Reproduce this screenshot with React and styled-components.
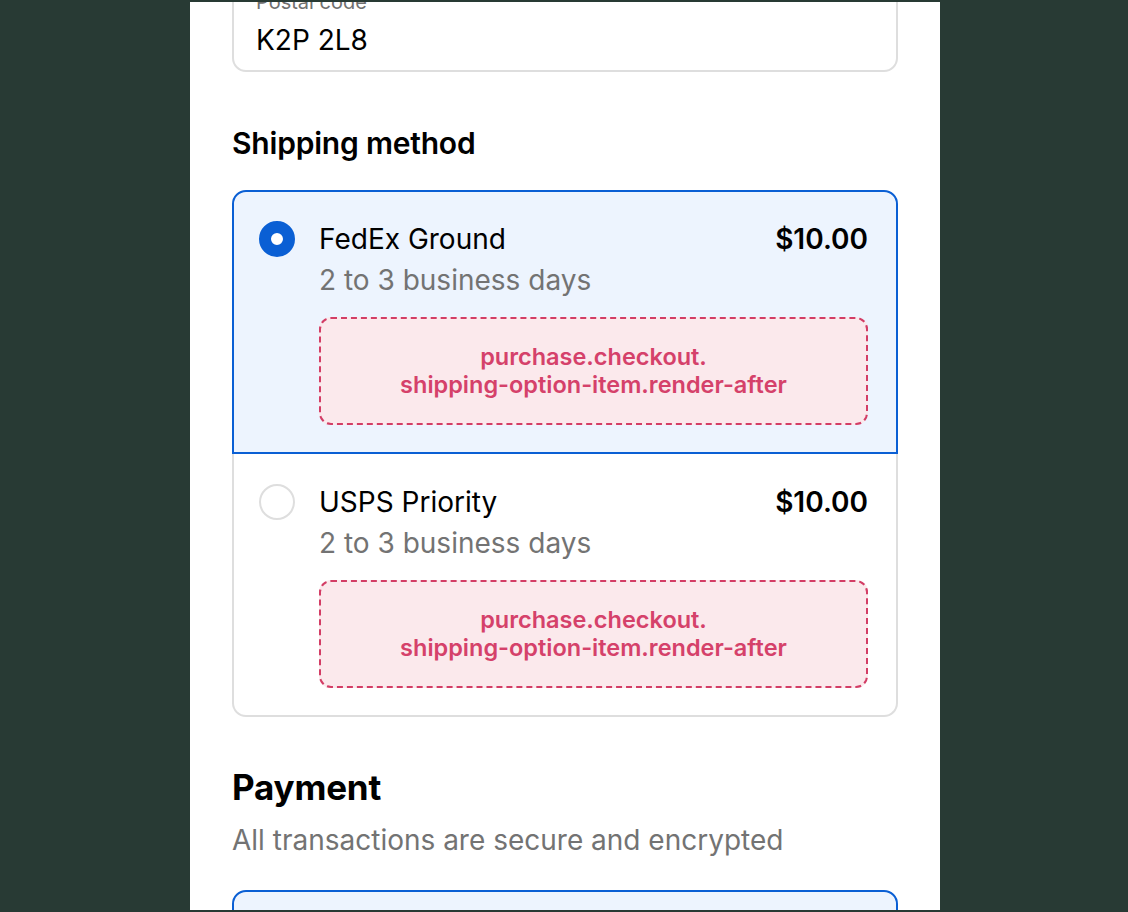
import React from "react";
import styled, { createGlobalStyle } from "styled-components";

const GlobalStyle = createGlobalStyle`
  html, body {
    margin: 0;
    padding: 0;
    background: #283a34;
    font-family: Inter, "Noto Sans", sans-serif;
    -webkit-font-smoothing: antialiased;
  }
`;

const Screen = styled.div`
  width: 750px;
  height: 908px;
  margin: 2px 0 0 190px;
  background: #fff;
  overflow: hidden;
`;

const Content = styled.div`
  margin-top: -31px;
  padding: 0 42px;
`;

const Field = styled.div`
  box-sizing: border-box;
  border: 2px solid #dedede;
  border-radius: 14px;
  padding: 17px 22px 13px;
  display: flex;
  flex-direction: column;
  gap: 9px;
`;

const FieldLabel = styled.span`
  font-size: 20px;
  line-height: 24px;
  color: #707070;
`;

const FieldValue = styled.span`
  font-size: 28px;
  line-height: 34px;
  color: #000;
`;

const SectionTitle = styled.h2`
  margin: ${({ $top }) => $top}px 0 0;
  font-size: ${({ $size }) => $size}px;
  font-weight: ${({ $weight }) => $weight};
  line-height: 40px;
  color: #000;
  letter-spacing: -0.2px;
`;

const SectionNote = styled.p`
  margin: 15px 0 0;
  font-size: 28px;
  line-height: 36px;
  color: #737373;
`;

const OptionList = styled.div`
  margin-top: 27px;
  display: flex;
  flex-direction: column;
`;

const Option = styled.div`
  display: flex;
  gap: 24px;
  padding: ${({ $selected }) => ($selected ? "25px 28px 27px 25px" : "26px 28px 27px 25px")};
  background: ${({ $selected }) => ($selected ? "#edf4fe" : "#fff")};
  border: 2px solid ${({ $selected }) => ($selected ? "#0a5fd4" : "#dedede")};
  border-top-width: ${({ $first, $selected }) => ($first || $selected ? 2 : 0)}px;
  border-radius: ${({ $first, $last }) =>
    `${$first ? 14 : 0}px ${$first ? 14 : 0}px ${$last ? 14 : 0}px ${$last ? 14 : 0}px`};
`;

const Radio = styled.span`
  flex: none;
  width: 36px;
  height: 36px;
  margin-top: 4px;
  box-sizing: border-box;
  border-radius: 50%;
  border: ${({ $checked }) => ($checked ? "12.5px solid #0a5fd4" : "2px solid #dedede")};
  background: #fff;
`;

const OptionBody = styled.div`
  flex: 1;
  display: flex;
  flex-direction: column;
`;

const OptionHead = styled.div`
  display: flex;
  justify-content: space-between;
  align-items: center;
  height: 44px;
`;

const OptionName = styled.span`
  font-size: 28px;
  color: #000;
`;

const Price = styled.span`
  font-size: 28px;
  font-weight: 600;
  color: #000;
`;

const Delivery = styled.span`
  font-size: 28px;
  line-height: 38px;
  color: #737373;
`;

const Extension = styled.div`
  margin-top: 18px;
  height: 108px;
  box-sizing: border-box;
  border: 2px dashed #d33d65;
  border-radius: 12px;
  background: #fbe9ec;
  display: flex;
  align-items: center;
  justify-content: center;
  text-align: center;
  font-size: 23.5px;
  line-height: 28px;
  font-weight: 600;
  color: #d5416a;
`;

const PaymentCard = styled.div`
  margin-top: 32px;
  height: 120px;
  border: 2px solid #0a5fd4;
  border-radius: 14px;
  background: #edf4fe;
`;

const options = [
  { name: "FedEx Ground", price: "$10.00", days: "2 to 3 business days", selected: true },
  { name: "USPS Priority", price: "$10.00", days: "2 to 3 business days", selected: false },
];

export default function App() {
  return (
    <>
      <GlobalStyle />
      <Screen>
        <Content>
          <Field>
            <FieldLabel>Postal code</FieldLabel>
            <FieldValue>K2P 2L8</FieldValue>
          </Field>

          <SectionTitle $top={51} $size={30} $weight={600}>
            Shipping method
          </SectionTitle>
          <OptionList>
            {options.map((o, i) => (
              <Option
                key={o.name}
                $selected={o.selected}
                $first={i === 0}
                $last={i === options.length - 1}
              >
                <Radio $checked={o.selected} />
                <OptionBody>
                  <OptionHead>
                    <OptionName>{o.name}</OptionName>
                    <Price>{o.price}</Price>
                  </OptionHead>
                  <Delivery>{o.days}</Delivery>
                  <Extension>
                    purchase.checkout.
                    <br />
                    shipping-option-item.render-after
                  </Extension>
                </OptionBody>
              </Option>
            ))}
          </OptionList>

          <SectionTitle $top={50} $size={35} $weight={700}>
            Payment
          </SectionTitle>
          <SectionNote>All transactions are secure and encrypted</SectionNote>
          <PaymentCard />
        </Content>
      </Screen>
    </>
  );
}
